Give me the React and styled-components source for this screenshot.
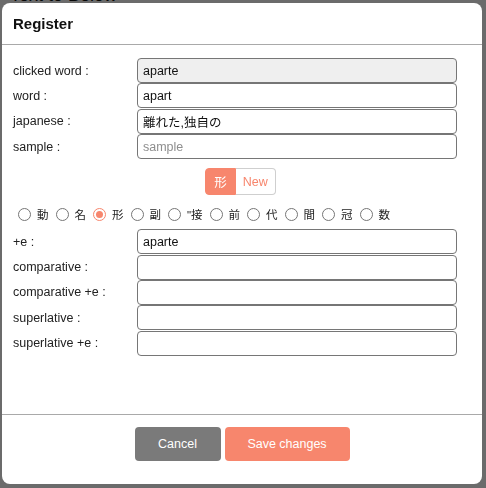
import React, { useState } from "react";
import styled, { createGlobalStyle } from "styled-components";

const Global = createGlobalStyle`
  html, body { margin: 0; padding: 0; }
  body {
    width: 486px; height: 488px; overflow: hidden;
    background: #ffffff;
    font-family: "Liberation Sans", "Noto Sans CJK JP", Arial, sans-serif;
  }
`;

const ACCENT = "#f7866d";

const Page = styled.div`
  padding: 0 10px;
  height: 488px;
`;

const PageTitle = styled.div`
  font-size: 18px;
  line-height: 18px;
  margin-top: -14px;
  color: #111;
`;

const Backdrop = styled.div`
  position: fixed;
  inset: 0;
  background: rgba(0, 0, 0, 0.58);
`;

const Modal = styled.div`
  position: fixed;
  left: 2px;
  top: 3px;
  width: 480px;
  height: 481px;
  background: #fff;
  border-radius: 8px;
  display: flex;
  flex-direction: column;
  overflow: hidden;
`;

const Header = styled.div`
  height: 41px;
  border-bottom: 1px solid #a9a9a9;
  display: flex;
  align-items: center;
  padding: 0 11px;
  box-sizing: content-box;
`;

const Title = styled.h5`
  margin: 0;
  font-size: 15px;
  font-weight: bold;
  color: #111;
`;

const Body = styled.div`
  flex: 1;
  padding: 13px 25px 0 11px;
  display: flex;
  flex-direction: column;
`;

const FieldGroup = styled.div`
  display: grid;
  grid-template-columns: 124px 320px;
  row-gap: 0.4px;
`;

const Label = styled.label`
  font-size: 12.5px;
  color: #222;
  display: flex;
  align-items: center;
  height: 25px;
`;

const Input = styled.input`
  box-sizing: border-box;
  height: 25px;
  width: 320px;
  margin: 0;
  border: 1px solid #767676;
  border-radius: 4px;
  padding: 0 5px;
  font-family: "Liberation Sans", "Noto Sans CJK JP", Arial, sans-serif;
  font-size: 12.5px;
  color: #111;
  background: ${(p) => (p.$disabled ? "#efefef" : "#fff")};
  outline: none;
  &::placeholder { color: #8e8e8e; }
`;

const ToggleRow = styled.div`
  display: flex;
  justify-content: center;
  margin-top: 9px;
  padding-left: 11px;
`;

const ToggleBtn = styled.button`
  height: 27px;
  box-sizing: border-box;
  padding: 0 ${(p) => p.$pad}px;
  font-family: "Liberation Sans", "Noto Sans CJK JP", Arial, sans-serif;
  font-size: 12.5px;
  margin: 0;
  border: 1px solid ${(p) => (p.$active ? ACCENT : "#cfcfcf")};
  background: ${(p) => (p.$active ? ACCENT : "#fff")};
  color: ${(p) => (p.$active ? "#fff" : ACCENT)};
  border-radius: ${(p) => (p.$first ? "4px 0 0 4px" : "0 4px 4px 0")};
  border-left-width: ${(p) => (p.$first ? 1 : 0)}px;
`;

const RadioRow = styled.div`
  display: flex;
  align-items: center;
  height: 18px;
  margin-top: 10px;
  margin-bottom: 6px;
  padding-left: 5px;
`;

const RadioItem = styled.label`
  display: flex;
  align-items: center;
  margin-right: 7px;
  font-size: 11.5px;
  color: #222;
`;

const RadioCircle = styled.span`
  box-sizing: border-box;
  width: 13px;
  height: 13px;
  border-radius: 50%;
  border: 1px solid ${(p) => (p.$on ? ACCENT : "#767676")};
  margin-right: 6px;
  display: flex;
  align-items: center;
  justify-content: center;
  &::after {
    content: "";
    width: 7px;
    height: 7px;
    border-radius: 50%;
    background: ${(p) => (p.$on ? ACCENT : "transparent")};
  }
`;

const Footer = styled.div`
  border-top: 1px solid #a9a9a9;
  display: flex;
  justify-content: center;
  gap: 4px;
  padding: 12px 0 23px 0;
`;

const Button = styled.button`
  height: 34px;
  width: ${(p) => p.$w}px;
  border: none;
  border-radius: 4px;
  background: ${(p) => p.$bg};
  color: #fff;
  font-family: "Liberation Sans", Arial, sans-serif;
  font-size: 12.5px;
  margin: 0;
`;

const pos = ["動", "名", "形", "副", "\"接", "前", "代", "間", "冠", "数"];

export default function App() {
  const [sel] = useState("形");
  return (
    <>
      <Global />
      <Page>
        <PageTitle>Text to Below</PageTitle>
      </Page>
      <Backdrop />
      <Modal>
        <Header>
          <Title>Register</Title>
        </Header>
        <Body>
          <FieldGroup>
            <Label>clicked word :</Label>
            <Input $disabled readOnly value="aparte" />
            <Label>word :</Label>
            <Input readOnly value="apart" />
            <Label>japanese :</Label>
            <Input readOnly value="離れた,独自の" />
            <Label>sample :</Label>
            <Input readOnly placeholder="sample" />
          </FieldGroup>
          <ToggleRow>
            <ToggleBtn $active $first $pad={8}>形</ToggleBtn>
            <ToggleBtn $pad={7}>New</ToggleBtn>
          </ToggleRow>
          <RadioRow>
            {pos.map((p) => (
              <RadioItem key={p}>
                <RadioCircle $on={p === sel} />
                {p}
              </RadioItem>
            ))}
          </RadioRow>
          <FieldGroup>
            <Label>+e :</Label>
            <Input readOnly value="aparte" />
            <Label>comparative :</Label>
            <Input readOnly value="" />
            <Label>comparative +e :</Label>
            <Input readOnly value="" />
            <Label>superlative :</Label>
            <Input readOnly value="" />
            <Label>superlative +e :</Label>
            <Input readOnly value="" />
          </FieldGroup>
        </Body>
        <Footer>
          <Button $w={86} $bg="#7a7a7a">Cancel</Button>
          <Button $w={125} $bg={ACCENT}>Save changes</Button>
        </Footer>
      </Modal>
    </>
  );
}
